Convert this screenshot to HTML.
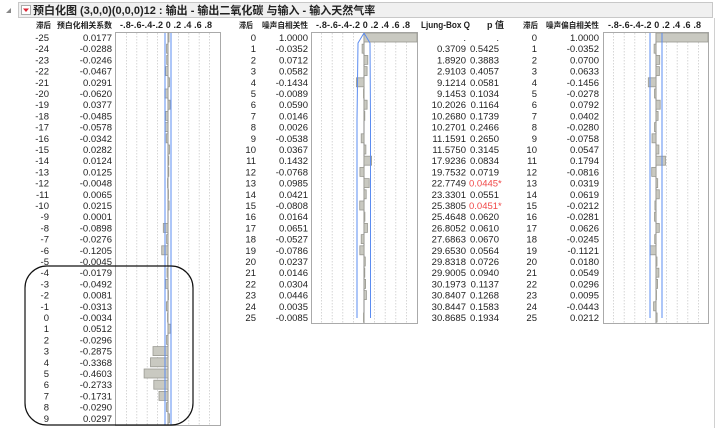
<!DOCTYPE html>
<html><head><meta charset="utf-8"><style>
html,body{margin:0;padding:0;background:#fff;width:716px;height:428px;overflow:hidden}
svg text{font-family:"Liberation Sans","Noto Sans CJK SC",sans-serif;font-size:9.5px;fill:#222}
.h{font-weight:bold;font-size:9px}
.hc{font-weight:bold;font-size:8px}
.r{text-anchor:end}
.b{fill:#c9c9c1;stroke:#9a9a92;stroke-width:0.8}
.g{stroke:#ccc;stroke-width:0.8;stroke-dasharray:1.5,1.5}
.bl{stroke:#5b8cf0;stroke-width:1;fill:none}
</style></head><body>
<svg width="716" height="428" xmlns="http://www.w3.org/2000/svg">
<rect x="18.5" y="2.5" width="694" height="15" fill="#f0f0f0" stroke="#c8c8c8"/>
<line x1="714.5" y1="18" x2="714.5" y2="428" stroke="#d0d0d0"/>
<path d="M6,13 L11,8 L11,13 Z" fill="#888"/>
<rect x="21.5" y="5.5" width="9" height="9" fill="#fff" stroke="#aaa"/>
<path d="M23,8.5 L29,8.5 L26,12 Z" fill="#d23"/>
<text x="33" y="14" style="font-size:11px;font-weight:bold">预白化图 (3,0,0)(0,0,0)12 : 输出 - 输出二氧化碳 与输入 - 输入天然气率</text>

<text class="hc" x="36" y="28" textLength="15" lengthAdjust="spacingAndGlyphs">滞后</text>
<text class="hc" x="57" y="28" textLength="55" lengthAdjust="spacingAndGlyphs">预白化相关系数</text>
<text class="h" x="120" y="28" textLength="92" lengthAdjust="spacing">-.8-.6-.4-.2 0 .2 .4 .6 .8</text>
<text class="hc" x="239" y="28" textLength="14" lengthAdjust="spacingAndGlyphs">滞后</text>
<text class="hc" x="262" y="28" textLength="46" lengthAdjust="spacingAndGlyphs">噪声自相关性</text>
<text class="h" x="316" y="28" textLength="94" lengthAdjust="spacing">-.8-.6-.4-.2 0 .2 .4 .6 .8</text>
<text class="h" x="421" y="28" textLength="49" lengthAdjust="spacingAndGlyphs">Ljung-Box Q</text>
<text class="h" x="487" y="28">p 值</text>
<text class="hc" x="523" y="28" textLength="15" lengthAdjust="spacingAndGlyphs">滞后</text>
<text class="hc" x="546" y="28" textLength="53" lengthAdjust="spacingAndGlyphs">噪声偏自相关性</text>
<text class="h" x="608" y="28" textLength="93" lengthAdjust="spacing">-.8-.6-.4-.2 0 .2 .4 .6 .8</text>

<rect x="115.5" y="32.5" width="105" height="393" fill="#fff" stroke="#aaa"/>
<g class="g">
<line x1="126.4" y1="33" x2="126.4" y2="425"/><line x1="136.8" y1="33" x2="136.8" y2="425"/><line x1="147.2" y1="33" x2="147.2" y2="425"/><line x1="157.6" y1="33" x2="157.6" y2="425"/>
<line x1="178.4" y1="33" x2="178.4" y2="425"/><line x1="188.8" y1="33" x2="188.8" y2="425"/><line x1="199.2" y1="33" x2="199.2" y2="425"/><line x1="209.6" y1="33" x2="209.6" y2="425"/>
</g>
<line x1="168" y1="33" x2="168" y2="425" stroke="#888" stroke-width="1"/>
<rect x="311.5" y="32.5" width="106" height="291" fill="#fff" stroke="#aaa"/>
<g class="g">
<line x1="321.6" y1="33" x2="321.6" y2="323"/><line x1="332.2" y1="33" x2="332.2" y2="323"/><line x1="342.8" y1="33" x2="342.8" y2="323"/><line x1="353.4" y1="33" x2="353.4" y2="323"/>
<line x1="374.6" y1="33" x2="374.6" y2="323"/><line x1="385.2" y1="33" x2="385.2" y2="323"/><line x1="395.8" y1="33" x2="395.8" y2="323"/><line x1="406.4" y1="33" x2="406.4" y2="323"/>
</g>
<line x1="364" y1="33" x2="364" y2="323" stroke="#888" stroke-width="1"/>
<rect x="603.5" y="32.5" width="105" height="291" fill="#fff" stroke="#aaa"/>
<g class="g">
<line x1="613.6" y1="33" x2="613.6" y2="323"/><line x1="624.2" y1="33" x2="624.2" y2="323"/><line x1="634.8" y1="33" x2="634.8" y2="323"/><line x1="645.4" y1="33" x2="645.4" y2="323"/>
<line x1="666.6" y1="33" x2="666.6" y2="323"/><line x1="677.2" y1="33" x2="677.2" y2="323"/><line x1="687.8" y1="33" x2="687.8" y2="323"/><line x1="698.4" y1="33" x2="698.4" y2="323"/>
</g>
<line x1="656" y1="33" x2="656" y2="323" stroke="#888" stroke-width="1"/>

<g transform="translate(0,32)"><text class="r" x="49" y="9">-25</text><text class="r" x="112" y="9">0.0177</text><rect class="b" x="168" y="1" width="1" height="9"/></g>
<g transform="translate(0,43.2)"><text class="r" x="49" y="9">-24</text><text class="r" x="112" y="9">-0.0288</text><rect class="b" x="166.5" y="1" width="1.5" height="9"/></g>
<g transform="translate(0,54.4)"><text class="r" x="49" y="9">-23</text><text class="r" x="112" y="9">-0.0246</text><rect class="b" x="166.7" y="1" width="1.3" height="9"/></g>
<g transform="translate(0,65.6)"><text class="r" x="49" y="9">-22</text><text class="r" x="112" y="9">-0.0467</text><rect class="b" x="165.6" y="1" width="2.4" height="9"/></g>
<g transform="translate(0,76.8)"><text class="r" x="49" y="9">-21</text><text class="r" x="112" y="9">0.0291</text><rect class="b" x="168" y="1" width="1.5" height="9"/></g>
<g transform="translate(0,88)"><text class="r" x="49" y="9">-20</text><text class="r" x="112" y="9">-0.0620</text><rect class="b" x="164.8" y="1" width="3.2" height="9"/></g>
<g transform="translate(0,99.2)"><text class="r" x="49" y="9">-19</text><text class="r" x="112" y="9">0.0377</text><rect class="b" x="168" y="1" width="2" height="9"/></g>
<g transform="translate(0,110.4)"><text class="r" x="49" y="9">-18</text><text class="r" x="112" y="9">-0.0485</text><rect class="b" x="165.5" y="1" width="2.5" height="9"/></g>
<g transform="translate(0,121.6)"><text class="r" x="49" y="9">-17</text><text class="r" x="112" y="9">-0.0578</text><rect class="b" x="165" y="1" width="3" height="9"/></g>
<g transform="translate(0,132.8)"><text class="r" x="49" y="9">-16</text><text class="r" x="112" y="9">-0.0342</text><rect class="b" x="166.2" y="1" width="1.8" height="9"/></g>
<g transform="translate(0,144)"><text class="r" x="49" y="9">-15</text><text class="r" x="112" y="9">0.0282</text><rect class="b" x="168" y="1" width="1.5" height="9"/></g>
<g transform="translate(0,155.2)"><text class="r" x="49" y="9">-14</text><text class="r" x="112" y="9">0.0124</text><rect class="b" x="168" y="1" width="0.8" height="9"/></g>
<g transform="translate(0,166.4)"><text class="r" x="49" y="9">-13</text><text class="r" x="112" y="9">0.0125</text><rect class="b" x="168" y="1" width="0.8" height="9"/></g>
<g transform="translate(0,177.6)"><text class="r" x="49" y="9">-12</text><text class="r" x="112" y="9">-0.0048</text><rect class="b" x="167.5" y="1" width="0.5" height="9"/></g>
<g transform="translate(0,188.8)"><text class="r" x="49" y="9">-11</text><text class="r" x="112" y="9">0.0065</text><rect class="b" x="168" y="1" width="0.5" height="9"/></g>
<g transform="translate(0,200)"><text class="r" x="49" y="9">-10</text><text class="r" x="112" y="9">0.0215</text><rect class="b" x="168" y="1" width="1.1" height="9"/></g>
<g transform="translate(0,211.2)"><text class="r" x="49" y="9">-9</text><text class="r" x="112" y="9">0.0001</text></g>
<g transform="translate(0,222.4)"><text class="r" x="49" y="9">-8</text><text class="r" x="112" y="9">-0.0898</text><rect class="b" x="163.3" y="1" width="4.7" height="9"/></g>
<g transform="translate(0,233.6)"><text class="r" x="49" y="9">-7</text><text class="r" x="112" y="9">-0.0276</text><rect class="b" x="166.6" y="1" width="1.4" height="9"/></g>
<g transform="translate(0,244.8)"><text class="r" x="49" y="9">-6</text><text class="r" x="112" y="9">-0.1205</text><rect class="b" x="161.7" y="1" width="6.3" height="9"/></g>
<g transform="translate(0,256)"><text class="r" x="49" y="9">-5</text><text class="r" x="112" y="9">-0.0045</text><rect class="b" x="167.5" y="1" width="0.5" height="9"/></g>
<g transform="translate(0,267.2)"><text class="r" x="49" y="9">-4</text><text class="r" x="112" y="9">-0.0179</text><rect class="b" x="167" y="1" width="1" height="9"/></g>
<g transform="translate(0,278.4)"><text class="r" x="49" y="9">-3</text><text class="r" x="112" y="9">-0.0492</text><rect class="b" x="165.4" y="1" width="2.6" height="9"/></g>
<g transform="translate(0,289.6)"><text class="r" x="49" y="9">-2</text><text class="r" x="112" y="9">0.0081</text><rect class="b" x="168" y="1" width="0.5" height="9"/></g>
<g transform="translate(0,300.8)"><text class="r" x="49" y="9">-1</text><text class="r" x="112" y="9">-0.0313</text><rect class="b" x="166.4" y="1" width="1.6" height="9"/></g>
<g transform="translate(0,312)"><text class="r" x="49" y="9">0</text><text class="r" x="112" y="9">-0.0034</text><rect class="b" x="167.5" y="1" width="0.5" height="9"/></g>
<g transform="translate(0,323.2)"><text class="r" x="49" y="9">1</text><text class="r" x="112" y="9">0.0512</text><rect class="b" x="168" y="1" width="2.7" height="9"/></g>
<g transform="translate(0,334.4)"><text class="r" x="49" y="9">2</text><text class="r" x="112" y="9">-0.0296</text><rect class="b" x="166.5" y="1" width="1.5" height="9"/></g>
<g transform="translate(0,345.6)"><text class="r" x="49" y="9">3</text><text class="r" x="112" y="9">-0.2875</text><rect class="b" x="153" y="1" width="15" height="9"/></g>
<g transform="translate(0,356.8)"><text class="r" x="49" y="9">4</text><text class="r" x="112" y="9">-0.3368</text><rect class="b" x="150.5" y="1" width="17.5" height="9"/></g>
<g transform="translate(0,368)"><text class="r" x="49" y="9">5</text><text class="r" x="112" y="9">-0.4603</text><rect class="b" x="144.1" y="1" width="23.9" height="9"/></g>
<g transform="translate(0,379.2)"><text class="r" x="49" y="9">6</text><text class="r" x="112" y="9">-0.2733</text><rect class="b" x="153.8" y="1" width="14.2" height="9"/></g>
<g transform="translate(0,390.4)"><text class="r" x="49" y="9">7</text><text class="r" x="112" y="9">-0.1731</text><rect class="b" x="159" y="1" width="9" height="9"/></g>
<g transform="translate(0,401.6)"><text class="r" x="49" y="9">8</text><text class="r" x="112" y="9">-0.0290</text><rect class="b" x="166.5" y="1" width="1.5" height="9"/></g>
<g transform="translate(0,412.8)"><text class="r" x="49" y="9">9</text><text class="r" x="112" y="9">0.0297</text><rect class="b" x="168" y="1" width="1.5" height="9"/></g>
<line class="bl" x1="165" y1="33" x2="165" y2="425"/><line class="bl" x1="171" y1="33" x2="171" y2="425"/>

<g transform="translate(0,32)"><text class="r" x="256" y="9">0</text><text class="r" x="308" y="9">1.0000</text><rect class="b" x="364" y="1" width="53" height="9"/><text class="r" x="466" y="9">.</text><text class="r" x="499" y="9">.</text><text class="r" x="537" y="9">0</text><text class="r" x="599" y="9">1.0000</text><rect class="b" x="656" y="1" width="52" height="9"/></g>
<g transform="translate(0,43.2)"><text class="r" x="256" y="9">1</text><text class="r" x="308" y="9">-0.0352</text><rect class="b" x="362.1" y="1" width="1.9" height="9"/><text class="r" x="466" y="9">0.3709</text><text class="r" x="499" y="9">0.5425</text><text class="r" x="537" y="9">1</text><text class="r" x="599" y="9">-0.0352</text><rect class="b" x="654.1" y="1" width="1.9" height="9"/></g>
<g transform="translate(0,54.4)"><text class="r" x="256" y="9">2</text><text class="r" x="308" y="9">0.0712</text><rect class="b" x="364" y="1" width="3.8" height="9"/><text class="r" x="466" y="9">1.8920</text><text class="r" x="499" y="9">0.3883</text><text class="r" x="537" y="9">2</text><text class="r" x="599" y="9">0.0700</text><rect class="b" x="656" y="1" width="3.7" height="9"/></g>
<g transform="translate(0,65.6)"><text class="r" x="256" y="9">3</text><text class="r" x="308" y="9">0.0582</text><rect class="b" x="364" y="1" width="3.1" height="9"/><text class="r" x="466" y="9">2.9103</text><text class="r" x="499" y="9">0.4057</text><text class="r" x="537" y="9">3</text><text class="r" x="599" y="9">0.0633</text><rect class="b" x="656" y="1" width="3.4" height="9"/></g>
<g transform="translate(0,76.8)"><text class="r" x="256" y="9">4</text><text class="r" x="308" y="9">-0.1434</text><rect class="b" x="356.4" y="1" width="7.6" height="9"/><text class="r" x="466" y="9">9.1214</text><text class="r" x="499" y="9">0.0581</text><text class="r" x="537" y="9">4</text><text class="r" x="599" y="9">-0.1456</text><rect class="b" x="648.3" y="1" width="7.7" height="9"/></g>
<g transform="translate(0,88)"><text class="r" x="256" y="9">5</text><text class="r" x="308" y="9">-0.0089</text><rect class="b" x="363.5" y="1" width="0.5" height="9"/><text class="r" x="466" y="9">9.1453</text><text class="r" x="499" y="9">0.1034</text><text class="r" x="537" y="9">5</text><text class="r" x="599" y="9">-0.0278</text><rect class="b" x="654.5" y="1" width="1.5" height="9"/></g>
<g transform="translate(0,99.2)"><text class="r" x="256" y="9">6</text><text class="r" x="308" y="9">0.0590</text><rect class="b" x="364" y="1" width="3.1" height="9"/><text class="r" x="466" y="9">10.2026</text><text class="r" x="499" y="9">0.1164</text><text class="r" x="537" y="9">6</text><text class="r" x="599" y="9">0.0792</text><rect class="b" x="656" y="1" width="4.2" height="9"/></g>
<g transform="translate(0,110.4)"><text class="r" x="256" y="9">7</text><text class="r" x="308" y="9">0.0146</text><rect class="b" x="364" y="1" width="0.8" height="9"/><text class="r" x="466" y="9">10.2680</text><text class="r" x="499" y="9">0.1739</text><text class="r" x="537" y="9">7</text><text class="r" x="599" y="9">0.0402</text><rect class="b" x="656" y="1" width="2.1" height="9"/></g>
<g transform="translate(0,121.6)"><text class="r" x="256" y="9">8</text><text class="r" x="308" y="9">0.0026</text><text class="r" x="466" y="9">10.2701</text><text class="r" x="499" y="9">0.2466</text><text class="r" x="537" y="9">8</text><text class="r" x="599" y="9">-0.0280</text><rect class="b" x="654.5" y="1" width="1.5" height="9"/></g>
<g transform="translate(0,132.8)"><text class="r" x="256" y="9">9</text><text class="r" x="308" y="9">-0.0538</text><rect class="b" x="361.2" y="1" width="2.8" height="9"/><text class="r" x="466" y="9">11.1591</text><text class="r" x="499" y="9">0.2650</text><text class="r" x="537" y="9">9</text><text class="r" x="599" y="9">-0.0758</text><rect class="b" x="652" y="1" width="4" height="9"/></g>
<g transform="translate(0,144)"><text class="r" x="256" y="9">10</text><text class="r" x="308" y="9">0.0367</text><rect class="b" x="364" y="1" width="1.9" height="9"/><text class="r" x="466" y="9">11.5750</text><text class="r" x="499" y="9">0.3145</text><text class="r" x="537" y="9">10</text><text class="r" x="599" y="9">0.0547</text><rect class="b" x="656" y="1" width="2.9" height="9"/></g>
<g transform="translate(0,155.2)"><text class="r" x="256" y="9">11</text><text class="r" x="308" y="9">0.1432</text><rect class="b" x="364" y="1" width="7.6" height="9"/><text class="r" x="466" y="9">17.9236</text><text class="r" x="499" y="9">0.0834</text><text class="r" x="537" y="9">11</text><text class="r" x="599" y="9">0.1794</text><rect class="b" x="656" y="1" width="9.5" height="9"/></g>
<g transform="translate(0,166.4)"><text class="r" x="256" y="9">12</text><text class="r" x="308" y="9">-0.0768</text><rect class="b" x="359.9" y="1" width="4.1" height="9"/><text class="r" x="466" y="9">19.7532</text><text class="r" x="499" y="9">0.0719</text><text class="r" x="537" y="9">12</text><text class="r" x="599" y="9">-0.0816</text><rect class="b" x="651.7" y="1" width="4.3" height="9"/></g>
<g transform="translate(0,177.6)"><text class="r" x="256" y="9">13</text><text class="r" x="308" y="9">0.0985</text><rect class="b" x="364" y="1" width="5.2" height="9"/><text class="r" x="466" y="9">22.7749</text><text x="469" y="9" style="fill:#f04848">0.0445*</text><text class="r" x="537" y="9">13</text><text class="r" x="599" y="9">0.0319</text><rect class="b" x="656" y="1" width="1.7" height="9"/></g>
<g transform="translate(0,188.8)"><text class="r" x="256" y="9">14</text><text class="r" x="308" y="9">0.0421</text><rect class="b" x="364" y="1" width="2.2" height="9"/><text class="r" x="466" y="9">23.3301</text><text class="r" x="499" y="9">0.0551</text><text class="r" x="537" y="9">14</text><text class="r" x="599" y="9">0.0619</text><rect class="b" x="656" y="1" width="3.3" height="9"/></g>
<g transform="translate(0,200)"><text class="r" x="256" y="9">15</text><text class="r" x="308" y="9">-0.0808</text><rect class="b" x="359.7" y="1" width="4.3" height="9"/><text class="r" x="466" y="9">25.3805</text><text x="469" y="9" style="fill:#f04848">0.0451*</text><text class="r" x="537" y="9">15</text><text class="r" x="599" y="9">-0.0212</text><rect class="b" x="654.9" y="1" width="1.1" height="9"/></g>
<g transform="translate(0,211.2)"><text class="r" x="256" y="9">16</text><text class="r" x="308" y="9">0.0164</text><rect class="b" x="364" y="1" width="0.9" height="9"/><text class="r" x="466" y="9">25.4648</text><text class="r" x="499" y="9">0.0620</text><text class="r" x="537" y="9">16</text><text class="r" x="599" y="9">-0.0281</text><rect class="b" x="654.5" y="1" width="1.5" height="9"/></g>
<g transform="translate(0,222.4)"><text class="r" x="256" y="9">17</text><text class="r" x="308" y="9">0.0651</text><rect class="b" x="364" y="1" width="3.5" height="9"/><text class="r" x="466" y="9">26.8052</text><text class="r" x="499" y="9">0.0610</text><text class="r" x="537" y="9">17</text><text class="r" x="599" y="9">0.0626</text><rect class="b" x="656" y="1" width="3.3" height="9"/></g>
<g transform="translate(0,233.6)"><text class="r" x="256" y="9">18</text><text class="r" x="308" y="9">-0.0527</text><rect class="b" x="361.2" y="1" width="2.8" height="9"/><text class="r" x="466" y="9">27.6863</text><text class="r" x="499" y="9">0.0670</text><text class="r" x="537" y="9">18</text><text class="r" x="599" y="9">-0.0245</text><rect class="b" x="654.7" y="1" width="1.3" height="9"/></g>
<g transform="translate(0,244.8)"><text class="r" x="256" y="9">19</text><text class="r" x="308" y="9">-0.0786</text><rect class="b" x="359.8" y="1" width="4.2" height="9"/><text class="r" x="466" y="9">29.6530</text><text class="r" x="499" y="9">0.0564</text><text class="r" x="537" y="9">19</text><text class="r" x="599" y="9">-0.1121</text><rect class="b" x="650.1" y="1" width="5.9" height="9"/></g>
<g transform="translate(0,256)"><text class="r" x="256" y="9">20</text><text class="r" x="308" y="9">0.0237</text><rect class="b" x="364" y="1" width="1.3" height="9"/><text class="r" x="466" y="9">29.8318</text><text class="r" x="499" y="9">0.0726</text><text class="r" x="537" y="9">20</text><text class="r" x="599" y="9">0.0180</text><rect class="b" x="656" y="1" width="1" height="9"/></g>
<g transform="translate(0,267.2)"><text class="r" x="256" y="9">21</text><text class="r" x="308" y="9">0.0146</text><rect class="b" x="364" y="1" width="0.8" height="9"/><text class="r" x="466" y="9">29.9005</text><text class="r" x="499" y="9">0.0940</text><text class="r" x="537" y="9">21</text><text class="r" x="599" y="9">0.0549</text><rect class="b" x="656" y="1" width="2.9" height="9"/></g>
<g transform="translate(0,278.4)"><text class="r" x="256" y="9">22</text><text class="r" x="308" y="9">0.0304</text><rect class="b" x="364" y="1" width="1.6" height="9"/><text class="r" x="466" y="9">30.1973</text><text class="r" x="499" y="9">0.1137</text><text class="r" x="537" y="9">22</text><text class="r" x="599" y="9">0.0296</text><rect class="b" x="656" y="1" width="1.6" height="9"/></g>
<g transform="translate(0,289.6)"><text class="r" x="256" y="9">23</text><text class="r" x="308" y="9">0.0446</text><rect class="b" x="364" y="1" width="2.4" height="9"/><text class="r" x="466" y="9">30.8407</text><text class="r" x="499" y="9">0.1268</text><text class="r" x="537" y="9">23</text><text class="r" x="599" y="9">0.0095</text><rect class="b" x="656" y="1" width="0.5" height="9"/></g>
<g transform="translate(0,300.8)"><text class="r" x="256" y="9">24</text><text class="r" x="308" y="9">0.0035</text><text class="r" x="466" y="9">30.8447</text><text class="r" x="499" y="9">0.1583</text><text class="r" x="537" y="9">24</text><text class="r" x="599" y="9">-0.0443</text><rect class="b" x="653.6" y="1" width="2.4" height="9"/></g>
<g transform="translate(0,312)"><text class="r" x="256" y="9">25</text><text class="r" x="308" y="9">-0.0085</text><rect class="b" x="363.5" y="1" width="0.5" height="9"/><text class="r" x="466" y="9">30.8685</text><text class="r" x="499" y="9">0.1934</text><text class="r" x="537" y="9">25</text><text class="r" x="599" y="9">0.0212</text><rect class="b" x="656" y="1" width="1.1" height="9"/></g>

<path class="bl" d="M364,33 L358,43 L357,120 L357,318"/>
<path class="bl" d="M364,33 L370,43 L370.5,120 L370.5,318"/>
<line class="bl" x1="650" y1="33" x2="650" y2="318"/><line class="bl" x1="662" y1="33" x2="662" y2="318"/>

<rect x="25" y="266" width="168" height="159" rx="22" ry="22" fill="none" stroke="#111" stroke-width="1.2"/>
</svg>
</body></html>
